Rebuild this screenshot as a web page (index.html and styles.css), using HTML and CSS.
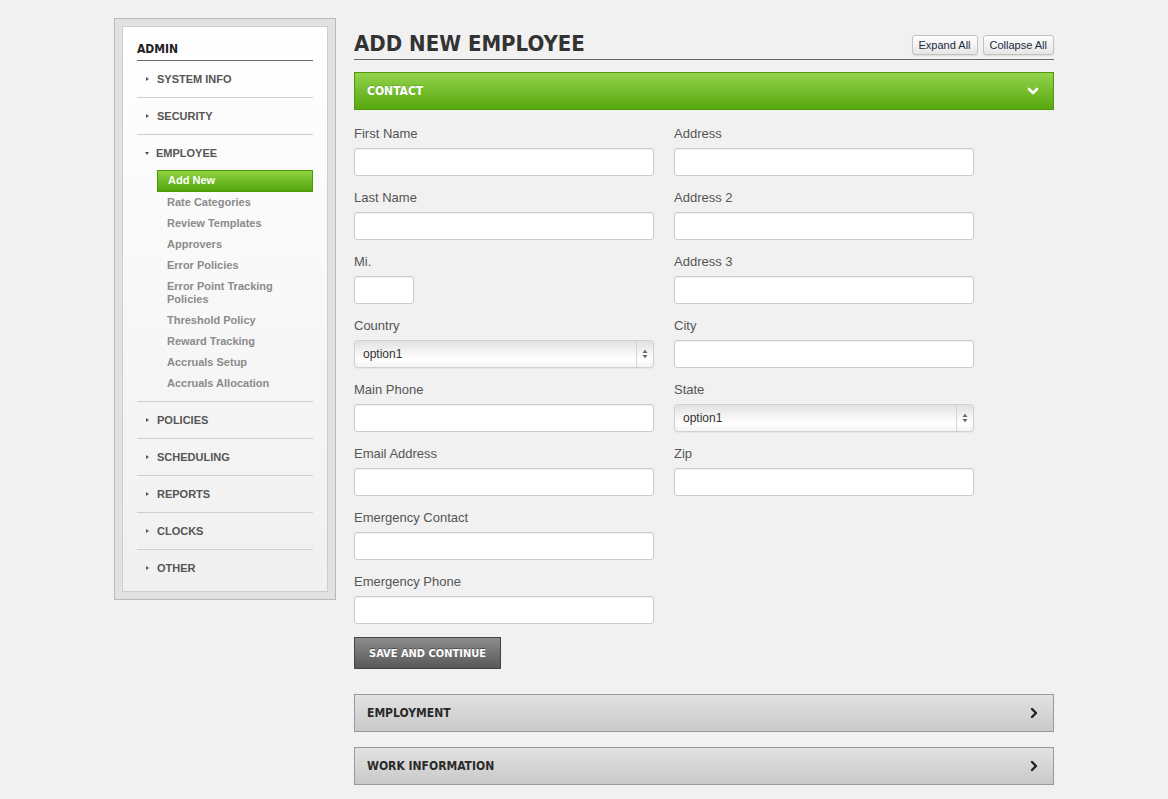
FILE: index.html
```html
<!DOCTYPE html>
<html>
<head>
<meta charset="utf-8">
<link rel="stylesheet" href="styles.css">
</head>
<body>
<div class="page">
  <aside class="sidebar">
    <div class="sidebar-inner">
      <div class="side-title">ADMIN</div>
      <ul class="menu">
        <li class="menu-item"><span class="tri tri-r"></span>SYSTEM INFO</li>
        <li class="menu-item"><span class="tri tri-r"></span>SECURITY</li>
        <li class="menu-item open">
          <div class="menu-head"><span class="tri tri-d"></span>EMPLOYEE</div>
          <ul class="submenu">
            <li class="sub active">Add New</li>
            <li class="sub">Rate Categories</li>
            <li class="sub">Review Templates</li>
            <li class="sub">Approvers</li>
            <li class="sub">Error Policies</li>
            <li class="sub">Error Point Tracking<br>Policies</li>
            <li class="sub">Threshold Policy</li>
            <li class="sub">Reward Tracking</li>
            <li class="sub">Accruals Setup</li>
            <li class="sub">Accruals Allocation</li>
          </ul>
        </li>
        <li class="menu-item"><span class="tri tri-r"></span>POLICIES</li>
        <li class="menu-item"><span class="tri tri-r"></span>SCHEDULING</li>
        <li class="menu-item"><span class="tri tri-r"></span>REPORTS</li>
        <li class="menu-item"><span class="tri tri-r"></span>CLOCKS</li>
        <li class="menu-item last"><span class="tri tri-r"></span>OTHER</li>
      </ul>
    </div>
  </aside>

  <main class="main">
    <div class="header">
      <h1 class="title">ADD NEW EMPLOYEE</h1>
      <div class="header-btns">
        <button class="small-btn">Expand All</button>
        <button class="small-btn">Collapse All</button>
      </div>
    </div>

    <div class="bar bar-green">
      <span>CONTACT</span>
      <svg class="chev" width="12" height="10" viewBox="0 0 12 10"><polyline points="2,3 6,7 10,3" fill="none" stroke="#fff" stroke-width="2.6" stroke-linecap="round" stroke-linejoin="round"/></svg>
    </div>

    <form class="form">
      <div class="col">
        <div class="field"><label>First Name</label><input class="txt" type="text"></div>
        <div class="field"><label>Last Name</label><input class="txt" type="text"></div>
        <div class="field"><label>Mi.</label><input class="txt txt-mi" type="text"></div>
        <div class="field"><label>Country</label><div class="sel"><span>option1</span><span class="sel-arrow"><svg width="6" height="10" viewBox="0 0 6 10"><path d="M0.5 4 L3 0.8 L5.5 4Z M0.5 6 L3 9.2 L5.5 6Z" fill="#666"/></svg></span></div></div>
        <div class="field"><label>Main Phone</label><input class="txt" type="text"></div>
        <div class="field"><label>Email Address</label><input class="txt" type="text"></div>
        <div class="field"><label>Emergency Contact</label><input class="txt" type="text"></div>
        <div class="field"><label>Emergency Phone</label><input class="txt" type="text"></div>
        <button type="button" class="save-btn">SAVE AND CONTINUE</button>
      </div>
      <div class="col">
        <div class="field"><label>Address</label><input class="txt" type="text"></div>
        <div class="field"><label>Address 2</label><input class="txt" type="text"></div>
        <div class="field"><label>Address 3</label><input class="txt" type="text"></div>
        <div class="field"><label>City</label><input class="txt" type="text"></div>
        <div class="field"><label>State</label><div class="sel"><span>option1</span><span class="sel-arrow"><svg width="6" height="10" viewBox="0 0 6 10"><path d="M0.5 4 L3 0.8 L5.5 4Z M0.5 6 L3 9.2 L5.5 6Z" fill="#666"/></svg></span></div></div>
        <div class="field"><label>Zip</label><input class="txt" type="text"></div>
      </div>
    </form>

    <div class="bar bar-gray">
      <span>EMPLOYMENT</span>
      <svg class="chev" width="10" height="12" viewBox="0 0 10 12"><polyline points="3,2 7,6 3,10" fill="none" stroke="#222" stroke-width="2.4" stroke-linecap="round" stroke-linejoin="round"/></svg>
    </div>
    <div class="bar bar-gray bar-gap">
      <span>WORK INFORMATION</span>
      <svg class="chev" width="10" height="12" viewBox="0 0 10 12"><polyline points="3,2 7,6 3,10" fill="none" stroke="#222" stroke-width="2.4" stroke-linecap="round" stroke-linejoin="round"/></svg>
    </div>
  </main>
</div>
</body>
</html>
```

FILE: styles.css
```css
* { box-sizing: border-box; }
html, body {
  margin: 0;
  padding: 0;
  background: #f1f1f1;
  font-family: "Liberation Sans", Arial, sans-serif;
}
.page {
  display: flex;
  align-items: flex-start;
  gap: 18px;
  padding: 18px 0 0 114px;
}

/* Sidebar */
.sidebar {
  width: 222px;
  height: 582px;
  border: 1px solid #b9b9b9;
  background: #e2e2e2;
  padding: 7px;
}
.sidebar-inner {
  height: 100%;
  border: 1px solid #cdcdcd;
  background: linear-gradient(#ffffff, #f0f0f0);
  padding: 14px 14px 0 14px;
}
.side-title {
  font-family: "DejaVu Sans Condensed", "DejaVu Sans", sans-serif;
  font-stretch: condensed;
  font-weight: bold;
  font-size: 12px;
  color: #222;
  line-height: 16px;
  padding-bottom: 3px;
  border-bottom: 1px solid #666;
}
.menu, .submenu {
  list-style: none;
  margin: 0;
  padding: 0;
}
.menu-item {
  font-weight: bold;
  font-size: 11px;
  color: #555;
  line-height: 35px;
  padding-top: 1px;
  border-bottom: 1px solid #cfcfcf;
  display: block;
}
.menu-item.open { padding-top: 0; }
.menu-item.last { border-bottom: none; }
.menu-head {
  line-height: 33px;
  padding-top: 2px;
}
.tri {
  display: inline-block;
  width: 0;
  height: 0;
  vertical-align: middle;
  margin-left: 8px;
  margin-right: 8px;
  position: relative;
  top: -1px;
}
.tri-r {
  border-top: 2.5px solid transparent;
  border-bottom: 2.5px solid transparent;
  border-left: 3px solid #555;
  margin-left: 9px;
}
.tri-d {
  border-left: 2.5px solid transparent;
  border-right: 2.5px solid transparent;
  border-top: 3px solid #555;
  margin-left: 8px;
  margin-right: 7px;
}
.submenu {
  padding: 0 0 7px 20px;
}
.sub {
  font-size: 11px;
  font-weight: bold;
  color: #8b8b8b;
  line-height: 13px;
  padding: 4px 0 4px 10px;
}
.sub.active {
  background: linear-gradient(#8ed33f, #54a40d);
  border: 1px solid #4d980b;
  color: #fff;
  padding: 3px 0 4px 10px;
  line-height: 13px;
  height: 22px;
}

/* Main */
.main {
  width: 700px;
}
.header {
  display: flex;
  justify-content: space-between;
  align-items: flex-end;
  height: 42px;
  border-bottom: 1px solid #6a6a6a;
}
.title {
  margin: 0;
  font-family: "DejaVu Sans Condensed", "DejaVu Sans", sans-serif;
  font-stretch: condensed;
  font-weight: bold;
  font-size: 22px;
  line-height: 26px;
  color: #333;
  padding-bottom: 2px;
}
.header-btns {
  display: flex;
  gap: 5px;
  padding-bottom: 4px;
}
.small-btn {
  font-family: "Liberation Sans", Arial, sans-serif;
  font-size: 11px;
  color: #1b2a44;
  height: 20px;
  padding: 0 6px;
  border: 1px solid #c2c2c2;
  border-radius: 3px;
  background: linear-gradient(#ffffff, #e6e6e6);
  box-shadow: 0 1px 1px rgba(0,0,0,0.08);
}

.bar {
  display: flex;
  justify-content: space-between;
  align-items: center;
  height: 38px;
  padding: 0 14px 0 12px;
  font-family: "DejaVu Sans Condensed", "DejaVu Sans", sans-serif;
  font-stretch: condensed;
  font-weight: bold;
  font-size: 12px;
}
.bar-green {
  margin-top: 12px;
  background: linear-gradient(#93d34b, #56a70f);
  border: 1px solid #4f9a0c;
  color: #fff;
  text-shadow: 0 -1px 0 rgba(0,0,0,0.15);
}
.bar-gray {
  margin-top: 25px;
  background: linear-gradient(#e2e2e2, #c9c9c9);
  border: 1px solid #9a9a9a;
  color: #2a2a2a;
}
.bar-gap { margin-top: 15px; }
.chev { display: block; }

/* Form */
.form {
  display: flex;
  gap: 20px;
  padding-top: 15px;
}
.col {
  width: 300px;
  display: flex;
  flex-direction: column;
}
.field {
  display: flex;
  flex-direction: column;
  margin-bottom: 13px;
}
.field label {
  font-size: 13px;
  line-height: 16px;
  color: #555;
  padding-top: 1px;
  margin-bottom: 6px;
}
.txt {
  width: 300px;
  height: 28px;
  border: 1px solid #cacaca;
  border-radius: 3px;
  background: #fff;
  box-shadow: inset 0 1px 1px rgba(0,0,0,0.05);
  margin: 0;
  padding: 0 6px;
}
.txt-mi { width: 60px; }
.sel {
  width: 300px;
  height: 28px;
  border: 1px solid #cfcfcf;
  border-radius: 4px;
  background: linear-gradient(#e2e2e2 0%, #f5f5f5 45%, #ffffff 70%, #f4f4f4 100%);
  display: flex;
  justify-content: space-between;
  align-items: center;
  font-size: 12px;
  color: #333;
  padding-left: 8px;
  box-shadow: 0 1px 1px rgba(0,0,0,0.05);
}
.sel-arrow {
  width: 17px;
  height: 26px;
  border-left: 1px solid #d6d6d6;
  display: flex;
  align-items: center;
  justify-content: center;
}
.save-btn {
  align-self: flex-start;
  width: 147px;
  height: 32px;
  margin: 0;
  padding: 0;
  border: 1px solid #444;
  background: linear-gradient(#8c8c8c, #585858);
  color: #fff;
  font-family: "DejaVu Sans Condensed", "DejaVu Sans", sans-serif;
  font-stretch: condensed;
  font-weight: bold;
  font-size: 11px;
  text-shadow: 0 -1px 0 rgba(0,0,0,0.4);
}
```
